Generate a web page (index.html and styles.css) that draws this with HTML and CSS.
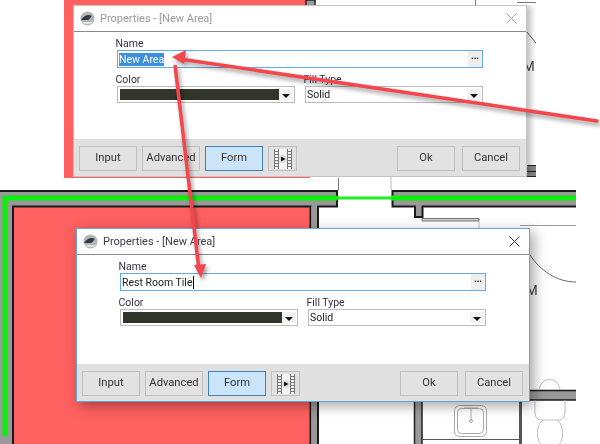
FILE: index.html
```html
<!DOCTYPE html>
<html lang="en">
<head>
    <meta charset="UTF-8">
    <title>Properties - [New Area]</title>
    <link rel="stylesheet" href="styles.css">
</head>
<body>
    <div class="stage">
        <!-- floor plan behind both dialogs -->
        <svg class="plan" width="600" height="444" viewBox="0 0 600 444">
            <!-- top capture -->
            <rect x="64" y="0" width="246" height="178" fill="#ff6060"/>
            <rect x="306" y="0" width="9" height="6" fill="#999" stroke="#222" stroke-width="1.5"/>
            <path d="M475.500 0V5M517 2.500H536" fill="none" stroke="#777" stroke-width="1"/>
            <path d="M527 32L536 43" fill="none" stroke="#555" stroke-width="1"/>
            <text class="plan-letter" x="523" y="71">M</text>
            <rect x="527" y="165" width="9" height="12" fill="#888"/>
            <path d="M527 165.500H536M527 171.500H536M527 176.500H536" stroke="#222" stroke-width="1"/>

            <!-- bottom capture: walls -->
            <rect x="14" y="207" width="296" height="237" fill="#ff6060"/>
            <rect x="0" y="191" width="337" height="16" fill="#999"/>
            <rect x="0" y="191" width="13" height="253" fill="#999"/>
            <path d="M0 191H337V206.500H318V444M310.500 444V206.500H13V444" fill="none" stroke="#1a1a1a" stroke-width="2"/>
            <rect x="312" y="207" width="5" height="237" fill="#999"/>
            <rect x="392" y="191" width="184" height="16" fill="#999"/>
            <rect x="415" y="207" width="7" height="10" fill="#999"/>
            <path d="M576 191H392.500V206.500H415V217H422.500V206.500H576" fill="none" stroke="#1a1a1a" stroke-width="2"/>
            <path d="M5 436V198H337M392 198H576" fill="none" stroke="#0cf00c" stroke-width="5"/>
            <path d="M337 198H392" fill="none" stroke="#20f020" stroke-width="3"/>
            <path d="M391 177V190M479 221V228" fill="none" stroke="#bbb" stroke-width="1"/>
            <path d="M338.500 178V190" fill="none" stroke="#777" stroke-width="1"/>
            <path d="M422 218.500H479V221H422Z" fill="#ccc" stroke="#777" stroke-width="1"/>
            <path d="M520 225.500H576" stroke="#999" stroke-width="1"/>
            <path d="M530 255C540 270 556 282 576 282" fill="none" stroke="#666" stroke-width="1"/>
            <text class="plan-letter" x="526" y="295">M</text>

            <!-- rooms under the lower dialog -->
            <rect x="415" y="402" width="7" height="42" fill="#999"/>
            <path d="M414.500 402V444M422 402V444" stroke="#222" stroke-width="1.500"/>
            <rect x="519" y="402" width="3" height="42" fill="#555"/>
            <path d="M422 439.500H520" stroke="#555" stroke-width="1"/>
            <rect x="530" y="391" width="46" height="9" fill="#999"/>
            <path d="M530 390.500H576M530 400H576" stroke="#1a1a1a" stroke-width="1.500"/>

            <!-- sink -->
            <g fill="none" stroke="#aaa" stroke-width="1">
                <rect x="454.500" y="405.500" width="32" height="31" rx="5"/>
                <rect x="457.500" y="408.500" width="26" height="25" rx="4"/>
                <path d="M464 408H478M471 408V421"/>
                <circle cx="471" cy="421" r="1.500"/>
            </g>
            <!-- toilet -->
            <g fill="none" stroke="#bbb" stroke-width="1">
                <path d="M539 390C541 376 558 376 560 390"/>
                <path d="M535 400V412C535 418 538 420 542 420H558C562 420 565 418 565 412V400"/>
                <path d="M543 420C534 426 538 444 541 444M557 420C566 426 562 444 559 444"/>
            </g>
        </svg>

        <!-- first capture, inactive window -->
        <div class="dialog dialog-back">
            <div class="title-bar">
                <svg class="app-logo" width="15" height="15" viewBox="0 0 15 15">
                    <circle cx="7.500" cy="7.500" r="7" fill="#b5b5b5"/>
                    <path d="M1 9C4 4 9 3 12 5C10 6 11 8 8 9C6 9 4 9 1 9Z" fill="#2f3a44"/>
                    <path d="M2 11H13C11 14 4 14 2 11Z" fill="#e2e2e2"/>
                </svg>
                <span class="title-text">Properties - [New Area]</span>
                <svg class="close-x" width="11" height="11" viewBox="0 0 11 11">
                    <path d="M.5 .5L10.500 10.500M10.500 .5L.5 10.500" fill="none" stroke="currentColor" stroke-width="1"/>
                </svg>
            </div>
            <div class="form">
                <label class="field-label">Name</label>
                <div class="name-box">
                    <span class="name-value"><span class="selected">New Area</span></span>
                    <span class="dots">&bull;&bull;&bull;</span>
                </div>
                <div class="combo-row">
                    <div class="combo-col">
                        <label class="field-label">Color</label>
                        <div class="combo">
                            <span class="swatch"></span>
                            <span class="drop"></span>
                        </div>
                    </div>
                    <div class="combo-col">
                        <label class="field-label">Fill Type</label>
                        <div class="combo">
                            <span class="combo-value">Solid</span>
                            <span class="drop"></span>
                        </div>
                    </div>
                </div>
            </div>
            <div class="footer">
                <button class="btn">Input</button>
                <button class="btn">Advanced</button>
                <button class="btn btn-active">Form</button>
                <button class="btn btn-film">
                    <svg width="20" height="22" viewBox="0 0 20 22">
                        <rect x="1" y="1" width="18" height="20" fill="#f4f4f4"/>
                        <path d="M1.500 1V21M5.500 1V21M14.500 1V21M18.500 1V21" fill="none" stroke="#777" stroke-width="1"/>
                        <path d="M2 3.500H5M2 6.500H5M2 9.500H5M2 12.500H5M2 15.500H5M2 18.500H5M15 3.500H18M15 6.500H18M15 9.500H18M15 12.500H18M15 15.500H18M15 18.500H18" fill="none" stroke="#777" stroke-width="1"/>
                        <circle cx="10" cy="11" r="4" fill="#ddd"/>
                        <path d="M8 8.500L12.500 11L8 13.500Z" fill="#111"/>
                    </svg>
                </button>
                <span class="footer-gap"></span>
                <button class="btn btn-ok">Ok</button>
                <button class="btn">Cancel</button>
            </div>
        </div>

        <!-- second capture, active window -->
        <div class="dialog dialog-front">
            <div class="title-bar">
                <svg class="app-logo" width="15" height="15" viewBox="0 0 15 15">
                    <circle cx="7.500" cy="7.500" r="7" fill="#b5b5b5"/>
                    <path d="M1 9C4 4 9 3 12 5C10 6 11 8 8 9C6 9 4 9 1 9Z" fill="#2f3a44"/>
                    <path d="M2 11H13C11 14 4 14 2 11Z" fill="#e2e2e2"/>
                </svg>
                <span class="title-text">Properties - [New Area]</span>
                <svg class="close-x" width="11" height="11" viewBox="0 0 11 11">
                    <path d="M.5 .5L10.500 10.500M10.500 .5L.5 10.500" fill="none" stroke="currentColor" stroke-width="1"/>
                </svg>
            </div>
            <div class="form">
                <label class="field-label">Name</label>
                <div class="name-box">
                    <span class="name-value">Rest Room Tile<span class="caret"></span></span>
                    <span class="dots">&bull;&bull;&bull;</span>
                </div>
                <div class="combo-row">
                    <div class="combo-col">
                        <label class="field-label">Color</label>
                        <div class="combo">
                            <span class="swatch"></span>
                            <span class="drop"></span>
                        </div>
                    </div>
                    <div class="combo-col">
                        <label class="field-label">Fill Type</label>
                        <div class="combo">
                            <span class="combo-value">Solid</span>
                            <span class="drop"></span>
                        </div>
                    </div>
                </div>
            </div>
            <div class="footer">
                <button class="btn">Input</button>
                <button class="btn">Advanced</button>
                <button class="btn btn-active">Form</button>
                <button class="btn btn-film">
                    <svg width="20" height="22" viewBox="0 0 20 22">
                        <rect x="1" y="1" width="18" height="20" fill="#f4f4f4"/>
                        <path d="M1.500 1V21M5.500 1V21M14.500 1V21M18.500 1V21" fill="none" stroke="#777" stroke-width="1"/>
                        <path d="M2 3.500H5M2 6.500H5M2 9.500H5M2 12.500H5M2 15.500H5M2 18.500H5M15 3.500H18M15 6.500H18M15 9.500H18M15 12.500H18M15 15.500H18M15 18.500H18" fill="none" stroke="#777" stroke-width="1"/>
                        <circle cx="10" cy="11" r="4" fill="#ddd"/>
                        <path d="M8 8.500L12.500 11L8 13.500Z" fill="#111"/>
                    </svg>
                </button>
                <span class="footer-gap"></span>
                <button class="btn btn-ok">Ok</button>
                <button class="btn">Cancel</button>
            </div>
        </div>

        <!-- red callout arrows -->
        <svg class="arrows" width="600" height="444" viewBox="0 0 600 444">
            <path d="M597 121L180 59" fill="none" stroke="#f4464c" stroke-width="3.500" stroke-linecap="round"/>
            <path d="M172 57L186 50L184 64Z" fill="#f4464c"/>
            <path d="M175 65L199 270" fill="none" stroke="#f4464c" stroke-width="3.500"/>
            <path d="M201 278L194 265L206 264Z" fill="#f4464c"/>
        </svg>
    </div>
</body>
</html>
```

FILE: styles.css
```css
body {
    margin: 0;
    background-color: #ffffff;
    font-family: 'Roboto', 'Noto Sans', sans-serif;
    overflow: hidden;
}

.stage {
    position: relative;
    width: 600px;
    height: 444px;
    overflow: hidden;
    filter: blur(0.35px);  /* the capture is a little soft */
}

.plan {
    position: absolute;
    left: 0;
    top: 0;
}

.plan-letter {
    font-family: 'Liberation Sans', sans-serif;
    font-size: 14px;
    fill: #333;
}

.arrows {
    position: absolute;
    left: 0;
    top: 0;
    filter: drop-shadow(2px 3px 2px rgba(0, 0, 0, 0.4));
}

/* Dialog windows */
.dialog {
    position: absolute;
    box-sizing: border-box;
    width: 454px;
    display: flex;
    flex-direction: column;
    background-color: #ffffff;
}

.dialog-back {
    left: 73px;
    top: 5px;
    height: 172px;
    border: 1px solid #c4c4c4;
    box-shadow: 4px 0 6px rgba(0, 0, 0, 0.25);
    clip-path: inset(0 -9px 0 0);
}

.dialog-front {
    left: 76px;
    top: 228px;
    height: 174px;
    border: 1px solid #5ea8e2;
    box-shadow: 4px 4px 12px rgba(0, 0, 0, 0.35);
}

.title-bar {
    flex: none;
    box-sizing: border-box;
    height: 26px;
    display: flex;
    align-items: center;
    gap: 5px;
    padding: 0 9px 0 6px;
    border-bottom: 1px solid #8a8a8a;
}

.title-text {
    flex: 1;
    font-size: 11px;
}

.dialog-back .title-text {
    color: #9a9a9a;
}

.dialog-front .title-text {
    color: #3c3c4c;
}

.close-x {
    color: #333;
}

.dialog-back .close-x {
    color: #a8a8a8;
}

/* Form area */
.form {
    flex: 1;
    display: flex;
    flex-direction: column;
    padding: 5px 43px 0 43px;
}

.field-label {
    display: block;
    height: 13px;
    margin-left: -1.5px;
    font-size: 10.5px;
    line-height: 13px;
    color: #33334a;
}

.name-box {
    box-sizing: border-box;
    height: 18px;
    display: flex;
    align-items: center;
    justify-content: space-between;
    border: 1px solid #62aeea;
    font-size: 10.5px;
    color: #222;
}

.name-value {
    display: flex;
    align-items: center;
    padding-left: 1px;
}

.selected {
    background-color: #3d8fe0;
    color: #ffffff;
}

.caret {
    width: 1px;
    height: 13px;
    background-color: #000000;
}

.dots {
    width: 14px;
    height: 16px;
    background-color: #eeeeee;
    font-size: 8px;
    line-height: 16px;
    text-align: center;
    color: #111;
}

.combo-row {
    display: flex;
    gap: 10px;
    margin-top: 5px;
}

.combo-col {
    flex: 1;
}

.combo {
    box-sizing: border-box;
    height: 17px;
    display: flex;
    align-items: center;
    justify-content: space-between;
    padding: 2px 1px 2px 2px;
    border: 1px solid #bdbdbd;
}

.swatch {
    flex: 1;
    height: 100%;
    background-color: #31362a;
}

.combo-value {
    flex: 1;
    margin-left: -1px;
    font-size: 10.5px;
    color: #222;
}

.drop {
    position: relative;
    width: 14px;
    height: 100%;
    background-color: #f2f2f2;
}

/* dropdown triangle */
.drop::after {
    content: "";
    position: absolute;
    left: 3px;
    top: 5px;
    border-left: 4px solid transparent;
    border-right: 4px solid transparent;
    border-top: 4px solid #111;
}

/* Bottom button row */
.footer {
    flex: none;
    box-sizing: border-box;
    height: 37px;
    display: flex;
    gap: 5px;
    padding: 7px 6px 0 5px;
    background-color: #e0e0e0;
}

.btn {
    box-sizing: border-box;
    width: 58px;
    height: 25px;
    padding: 0 0 2px;
    border: 1px solid #bfbfbf;
    background-color: #e2e2e2;
    font-family: inherit;
    font-size: 11.2px;
    color: #333;
}

.btn-active {
    border-color: #3f82b8;
    background-color: #cce4f7;
}

.btn-film {
    width: 29px;
    padding: 0;
    display: flex;
    align-items: center;
    justify-content: center;
}

.btn-ok {
    margin-right: 2px;
}

.footer-gap {
    flex: 1;
}
```
